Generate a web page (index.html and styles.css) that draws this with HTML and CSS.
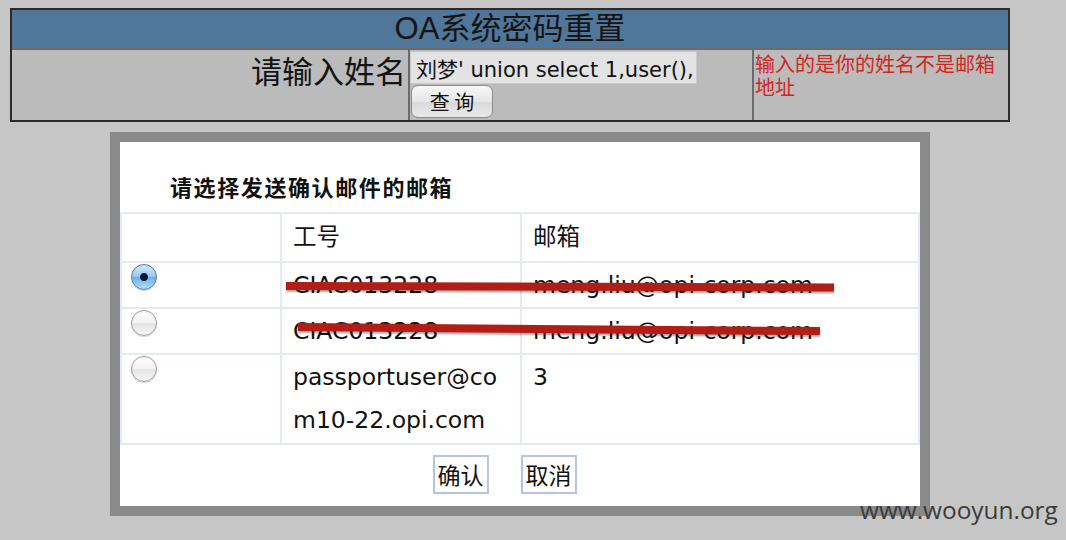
FILE: index.html
```html
<!DOCTYPE html>
<html lang="zh-CN">
<head>
<meta charset="utf-8">
<title>OA系统密码重置</title>
<link rel="stylesheet" href="styles.css">
</head>
<body>
<table class="top">
  <colgroup>
    <col class="t1">
    <col class="t2">
    <col class="t3">
  </colgroup>
  <tr>
    <th class="title" colspan="3">OA系统密码重置</th>
  </tr>
  <tr class="form-row">
    <td class="label">请输入姓名</td>
    <td class="field">
      <input class="name-input" type="text" value="刘梦' union select 1,user(),version(),4#">
      <button class="query" type="button">查 询</button>
    </td>
    <td class="hint">输入的是你的姓名不是邮箱地址</td>
  </tr>
</table>

<div class="modal">
  <div class="modal-title">请选择发送确认邮件的邮箱</div>
  <table class="list">
    <colgroup>
      <col class="w1">
      <col class="w2">
      <col class="w3">
    </colgroup>
    <tr class="head">
      <td class="c1"></td>
      <td class="c2">工号</td>
      <td class="c3">邮箱</td>
    </tr>
    <tr>
      <td class="c1"><span class="radio on"></span></td>
      <td class="c2">CIAC013228</td>
      <td class="c3">meng.liu@opi-corp.com</td>
    </tr>
    <tr>
      <td class="c1"><span class="radio"></span></td>
      <td class="c2">CIAC013228</td>
      <td class="c3">meng.liu@opi-corp.com</td>
    </tr>
    <tr class="last">
      <td class="c1"><span class="radio"></span></td>
      <td class="c2 wrap">passportuser@com10-22.opi.com</td>
      <td class="c3">3</td>
    </tr>
  </table>
  <div class="actions">
    <button class="act" type="button">确认</button>
    <button class="act" type="button">取消</button>
  </div>
  <div class="strike strike-1"></div>
  <div class="strike strike-2"></div>
</div>

<div class="watermark">www.wooyun.org</div>
</body>
</html>
```

FILE: styles.css
```css
html, body {
  margin: 0;
  padding: 0;
}

body {
  background: #c6c6c6;
  font-family: "DejaVu Sans", "Noto Sans CJK SC", sans-serif;
  color: #111;
  width: 1066px;
  height: 540px;
  overflow: hidden;
  position: relative;
}

/* ---------- top form table ---------- */
.top {
  margin: 8px 0 0 10px;
  width: 1000px;
  border: 2px solid #2b2b2b;
  border-spacing: 0;
  border-collapse: separate;
  table-layout: fixed;
}

.top .t1 { width: 398px; }
.top .t2 { width: 344px; }
.top .t3 { width: 254px; }

.top .title {
  height: 38px;
  padding: 0;
  background: #50769a;
  border-bottom: 2px solid #6b6b6b;
  font-family: "Liberation Sans", "Noto Sans CJK SC", sans-serif;
  font-size: 31px;
  font-weight: normal;
  line-height: 38px;
  color: #151515;
  text-align: center;
}

.top .form-row {
  height: 70px;
}

.top td {
  background: #bbbbbb;
  padding: 0;
  vertical-align: top;
}

.top .label {
  padding: 1px 2px 0 0;
  border-right: 2px solid #6b6b6b;
  font-family: "Noto Sans CJK SC", sans-serif;
  font-size: 31px;
  line-height: 37px;
  text-align: right;
  color: #141414;
}

.top .field {
  padding-top: 1px;
  border-right: 2px solid #6b6b6b;
}

.name-input {
  display: block;
  box-sizing: border-box;
  width: 287px;
  height: 33px;
  margin: 0;
  padding: 0 3px 0 5px;
  border: 1px solid #cbcbcb;
  border-top-color: #c2c2c2;
  background: #e3e3e3;
  font-family: "DejaVu Sans", "Noto Sans CJK SC", sans-serif;
  font-size: 21px;
  color: #111;
  outline: none;
}

.query {
  display: block;
  box-sizing: border-box;
  width: 82px;
  height: 33px;
  margin: 1px 0 0 1px;
  padding: 0;
  border: 1px solid #8b8b8b;
  border-radius: 7px;
  background: linear-gradient(#f6f6f6, #e6e6e6 50%, #d9d9d9 51%, #e9e9e9);
  font-family: "Noto Sans CJK SC", sans-serif;
  font-size: 20px;
  line-height: 31px;
  color: #111;
}

.top .hint {
  padding: 2px 0 0 1px;
  font-family: "Noto Sans CJK SC", sans-serif;
  font-size: 20px;
  line-height: 23px;
  color: #d3251f;
}

/* ---------- modal ---------- */
.modal {
  position: relative;
  width: 800px;
  height: 364px;
  margin: 10px 0 0 110px;
  border: 10px solid #8a8a8a;
  background: #ffffff;
}

.modal-title {
  height: 28px;
  padding: 30px 0 12px 50px;
  font-family: "Noto Sans CJK SC", sans-serif;
  font-size: 22px;
  font-weight: 700;
  letter-spacing: 1.6px;
  line-height: 28px;
  color: #111;
}

.list {
  width: 800px;
  table-layout: fixed;
  border-spacing: 0;
  border-collapse: separate;
  border-left: 2px solid #e3e9f5;
  border-top: 2px solid #e3e9f5;
  font-size: 23.5px;
  color: #111;
}

.list .w1 { width: 160px; }
.list .w2 { width: 240px; }
.list .w3 { width: 398px; }

.list td {
  padding: 1px 11px 0;
  line-height: 43px;
  vertical-align: top;
  border-right: 2px solid #e3e9f5;
  border-bottom: 2px solid #e3e9f5;
  text-align: left;
}

.list .last td {
  padding-bottom: 1px;
}

.list .head td {
  height: 47px;
  padding: 0 11px;
  line-height: 47px;
  vertical-align: middle;
}

.list .c1 {
  padding-left: 9px;
}

.list .wrap {
  word-break: break-all;
}

.radio {
  display: block;
  box-sizing: border-box;
  width: 26px;
  height: 26px;
  border-radius: 50%;
  border: 1px solid #9d9d9d;
  background: linear-gradient(#ffffff, #f3f3f3 48%, #e4e4e4 52%, #f5f5f5);
  box-shadow: 0 1px 1px rgba(0, 0, 0, 0.18);
}

.radio.on {
  border-color: #58789c;
  background:
    radial-gradient(circle, #0d1930 0, #0d1930 3.5px, transparent 4.5px),
    linear-gradient(#d3e8fb, #98c9f2 48%, #6cb0ea 52%, #b2dcfc);
}

.actions {
  padding: 10px 31px 0 0;
  display: flex;
  justify-content: center;
  gap: 32px;
}

.act {
  box-sizing: border-box;
  height: 39px;
  margin: 0;
  padding: 0 3px;
  border: 2px solid #b4c3e6;
  background: #ffffff;
  font-family: "Noto Sans CJK SC", sans-serif;
  font-size: 23px;
  line-height: 33px;
  color: #111;
}

/* redaction marks drawn over the table */
.strike {
  position: absolute;
  height: 8px;
  background: #b21e15;
  box-shadow: 0 2px 2px rgba(40, 0, 0, 0.35);
  transform-origin: 0 50%;
}

.strike-1 {
  left: 166px;
  top: 140px;
  width: 548px;
  transform: rotate(0.15deg);
}

.strike-2 {
  left: 178px;
  top: 181px;
  width: 522px;
  transform: rotate(0.45deg);
}

.watermark {
  position: absolute;
  left: 860px;
  top: 493px;
  font-family: "Open Sans", sans-serif;
  font-size: 24.4px;
  color: #3b3b3b;
  line-height: 34px;
}
```
